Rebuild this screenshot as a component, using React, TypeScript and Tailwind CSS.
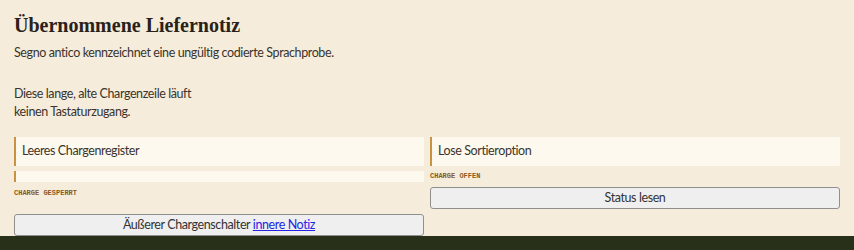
import React from "react";

const Field = ({
  label,
  status,
  button,
  extraRow,
}: {
  label: string;
  status: string;
  button: React.ReactNode;
  extraRow?: boolean;
}) => {
  return (
    <div className="flex flex-col">
      <div className="h-[29px] flex items-center bg-[#fef9ee] border-l-2 border-[#c8923f] pl-[6px] text-[12.5px] tracking-[-0.4px] text-[#3a342c]">
        {label}
      </div>
      {extraRow && (
        <div className="h-[11px] mt-[5px] bg-[#fef9ee] border-l-2 border-[#c8923f]" />
      )}
      <div
        className={`${
          extraRow ? "mt-[7px] mb-[17px]" : "mt-[6px] mb-[7px]"
        } h-[8px] leading-[8px] text-[7px] font-bold uppercase text-[#8a5a26] font-['Liberation_Mono',monospace]`}
      >
        {status}
      </div>
      <button className="h-[22px] w-full rounded-[3px] border border-[#8f8f8f] bg-[#efeff0] text-[12.5px] tracking-[-0.4px] text-[#333] leading-none">
        {button}
      </button>
    </div>
  );
};

export default function App() {
  return (
    <div className="w-[854px] min-h-[250px] bg-[#f5ecdc] font-['Lato','Noto_Sans',sans-serif] text-[#3a342c]">
      <div className="px-[14px] pt-[13px]">
        <h1 className="text-[20px] leading-[24px] font-bold text-[#2a2219] font-['Liberation_Serif',serif]">
          Übernommene Liefernotiz
        </h1>
        <p className="mt-[7px] text-[12.5px] tracking-[-0.4px] leading-[18px]">
          Segno antico kennzeichnet eine ungültig codierte Sprachprobe.
        </p>
        <p className="mt-[23px] w-[200px] text-[12.5px] tracking-[-0.4px] leading-[18px]">
          Diese lange, alte Chargenzeile läuft keinen Tastaturzugang.
        </p>
        <div className="mt-[16px] grid grid-cols-2 gap-[6px] items-start">
          <Field
            label="Leeres Chargenregister"
            status="Charge gesperrt"
            extraRow
            button={
              <>
                Äußerer Chargenschalter{" "}
                <a href="#" className="text-[#2424e6] underline">
                  innere Notiz
                </a>
              </>
            }
          />
          <Field label="Lose Sortieroption" status="Charge offen" button="Status lesen" />
        </div>
      </div>
      <footer className="h-[20px] bg-[#293019]" />
    </div>
  );
}
